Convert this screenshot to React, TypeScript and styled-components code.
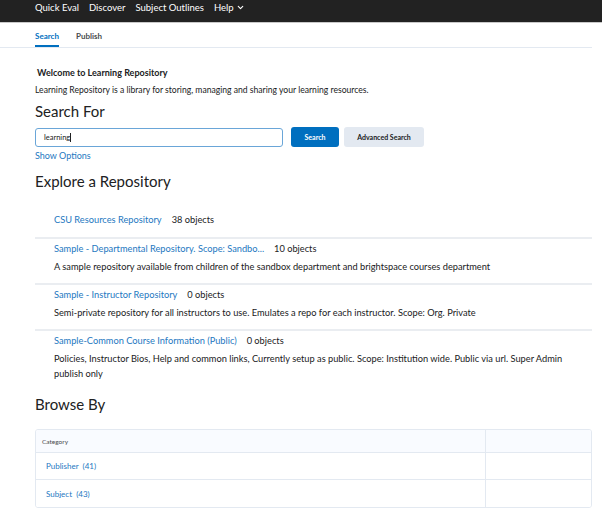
import styled, { createGlobalStyle } from "styled-components";
import { Fragment } from "react";
import { ChevronDown } from "lucide-react";

const GlobalStyle = createGlobalStyle`
  body {
    margin: 0;
    background: #ffffff;
    font-family: Lato, "Open Sans", sans-serif;
    color: #202122;
  }
  * {
    box-sizing: border-box;
  }
`;

const TopBar = styled.nav`
  height: 23px;
  background: #222222;
  border-bottom: 1px solid #c9c9c9;
  display: flex;
  align-items: flex-start;
  gap: 10px;
  padding: 1px 0 0 35px;
`;

const NavItem = styled.span`
  color: #ffffff;
  font-size: 9.5px;
  line-height: 13px;
  display: flex;
  align-items: center;
  gap: 2px;
`;

const Tabs = styled.div`
  display: flex;
  gap: 17px;
  margin: 0 10px 0 0;
  padding-left: 35px;
  border-bottom: 1px solid #e3e9f1;
  height: 25px;
`;

const Tab = styled.div<{ active?: boolean }>`
  font-size: 8px;
  font-weight: 700;
  padding-top: 8px;
  color: ${(p) => (p.active ? "#006fbf" : "#494c4e")};
  border-bottom: 2px solid ${(p) => (p.active ? "#006fbf" : "transparent")};
`;

const Main = styled.main`
  padding: 0 10px 0 35px;
`;

const Welcome = styled.h3`
  font-size: 9px;
  font-weight: 700;
  margin: 19px 0 0 2px;
  line-height: 12px;
`;

const Intro = styled.p`
  font-size: 8.6px;
  margin: 5px 0 0;
  line-height: 12px;
`;

const Heading = styled.h2<{ top?: number }>`
  font-size: 15px;
  font-weight: 400;
  margin: ${(p) => p.top ?? 0}px 0 0;
  line-height: 20px;
`;

const SearchRow = styled.div`
  display: flex;
  align-items: center;
  gap: 5px;
  margin-top: 6px;
`;

const SearchInput = styled.div`
  width: 248px;
  height: 19px;
  border: 1px solid #6aa6d8;
  border-radius: 3px;
  font-size: 7.5px;
  padding: 0 8px;
  display: flex;
  align-items: center;
  margin-right: 3px;
`;

const Caret = styled.span`
  display: inline-block;
  width: 1px;
  height: 9px;
  background: #202122;
`;

const Button = styled.button<{ primary?: boolean }>`
  height: 20px;
  border: none;
  border-radius: 3px;
  font-family: inherit;
  font-size: 7px;
  font-weight: 700;
  padding: 0;
  width: ${(p) => (p.primary ? "48px" : "80px")};
  background: ${(p) => (p.primary ? "#006fbf" : "#e3e9f1")};
  color: ${(p) => (p.primary ? "#ffffff" : "#202122")};
`;

const Link = styled.a`
  color: #2478bf;
  text-decoration: none;
`;

const ShowOptions = styled(Link)`
  display: block;
  font-size: 9px;
  margin-top: 3px;
  line-height: 12px;
`;

const RepoList = styled.div`
  margin-top: 19px;
`;

const Repo = styled.div<{ last?: boolean }>`
  padding: 4px 0 ${(p) => (p.last ? "2px" : "9px")} 19px;
  border-bottom: ${(p) => (p.last ? "none" : "2px solid #eaedf1")};
  font-size: 9.25px;
  line-height: 12px;
`;

const RepoTitle = styled.div<{ solo?: boolean }>`
  display: flex;
  gap: 10px;
  padding-bottom: ${(p) => (p.solo ? "2px" : "0")};
`;

const Count = styled.span`
  color: #202122;
`;

const RepoDesc = styled.p`
  margin: 4px 0 0;
  line-height: 15px;
  color: #202122;
`;

const Table = styled.div`
  margin-top: 15px;
  border: 1px solid #e3e9f1;
  border-radius: 3px;
  display: grid;
  grid-template-columns: 450px 1fr;
  overflow: hidden;
`;

const Cell = styled.div<{ head?: boolean; end?: boolean; last?: boolean }>`
  height: ${(p) => (p.head ? "23px" : "27px")};
  background: ${(p) => (p.head ? "#f9fbff" : "#ffffff")};
  border-bottom: ${(p) => (p.last ? "none" : "1px solid #e3e9f1")};
  border-right: ${(p) => (p.end ? "none" : "1px solid #e3e9f1")};
  display: flex;
  align-items: center;
  padding-left: ${(p) => (p.head ? "6px" : "10px")};
  font-size: ${(p) => (p.head ? "6.5px" : "8px")};
  color: ${(p) => (p.head ? "#494c4e" : "inherit")};
`;

const repos = [
  { title: "CSU Resources Repository", count: "38 objects" },
  {
    title: "Sample - Departmental Repository. Scope: Sandbo...",
    count: "10 objects",
    desc: "A sample repository available from children of the sandbox department and brightspace courses department",
  },
  {
    title: "Sample - Instructor Repository",
    count: "0 objects",
    desc: "Semi-private repository for all instructors to use. Emulates a repo for each instructor. Scope: Org. Private",
  },
  {
    title: "Sample-Common Course Information (Public)",
    count: "0 objects",
    desc: "Policies, Instructor Bios, Help and common links, Currently setup as public. Scope: Institution wide. Public via url. Super Admin publish only",
  },
];

const categories = [
  { name: "Publisher", count: 41 },
  { name: "Subject", count: 43 },
];

export default function App() {
  return (
    <>
      <GlobalStyle />
      <TopBar>
        <NavItem>Quick Eval</NavItem>
        <NavItem>Discover</NavItem>
        <NavItem>Subject Outlines</NavItem>
        <NavItem>
          Help <ChevronDown size={9} strokeWidth={3} />
        </NavItem>
      </TopBar>
      <Tabs>
        <Tab active>Search</Tab>
        <Tab>Publish</Tab>
      </Tabs>
      <Main>
        <Welcome>Welcome to Learning Repository</Welcome>
        <Intro>
          Learning Repository is a library for storing, managing and sharing
          your learning resources.
        </Intro>
        <Heading top={5}>Search For</Heading>
        <SearchRow>
          <SearchInput>
            learning
            <Caret />
          </SearchInput>
          <Button primary>Search</Button>
          <Button>Advanced Search</Button>
        </SearchRow>
        <ShowOptions href="#">Show Options</ShowOptions>

        <Heading top={9}>Explore a Repository</Heading>
        <RepoList>
          {repos.map((r, i) => (
            <Repo key={r.title} last={i === repos.length - 1}>
              <RepoTitle solo={!r.desc}>
                <Link href="#">{r.title}</Link>
                <Count>{r.count}</Count>
              </RepoTitle>
              {r.desc && <RepoDesc>{r.desc}</RepoDesc>}
            </Repo>
          ))}
        </RepoList>

        <Heading top={11}>Browse By</Heading>
        <Table>
          <Cell head>Category</Cell>
          <Cell head end />
          {categories.map((c, i) => (
            <Fragment key={c.name}>
              <Cell last={i === categories.length - 1}>
                <Link href="#">
                  {c.name}&nbsp; ({c.count})
                </Link>
              </Cell>
              <Cell end last={i === categories.length - 1} />
            </Fragment>
          ))}
        </Table>
      </Main>
    </>
  );
}
